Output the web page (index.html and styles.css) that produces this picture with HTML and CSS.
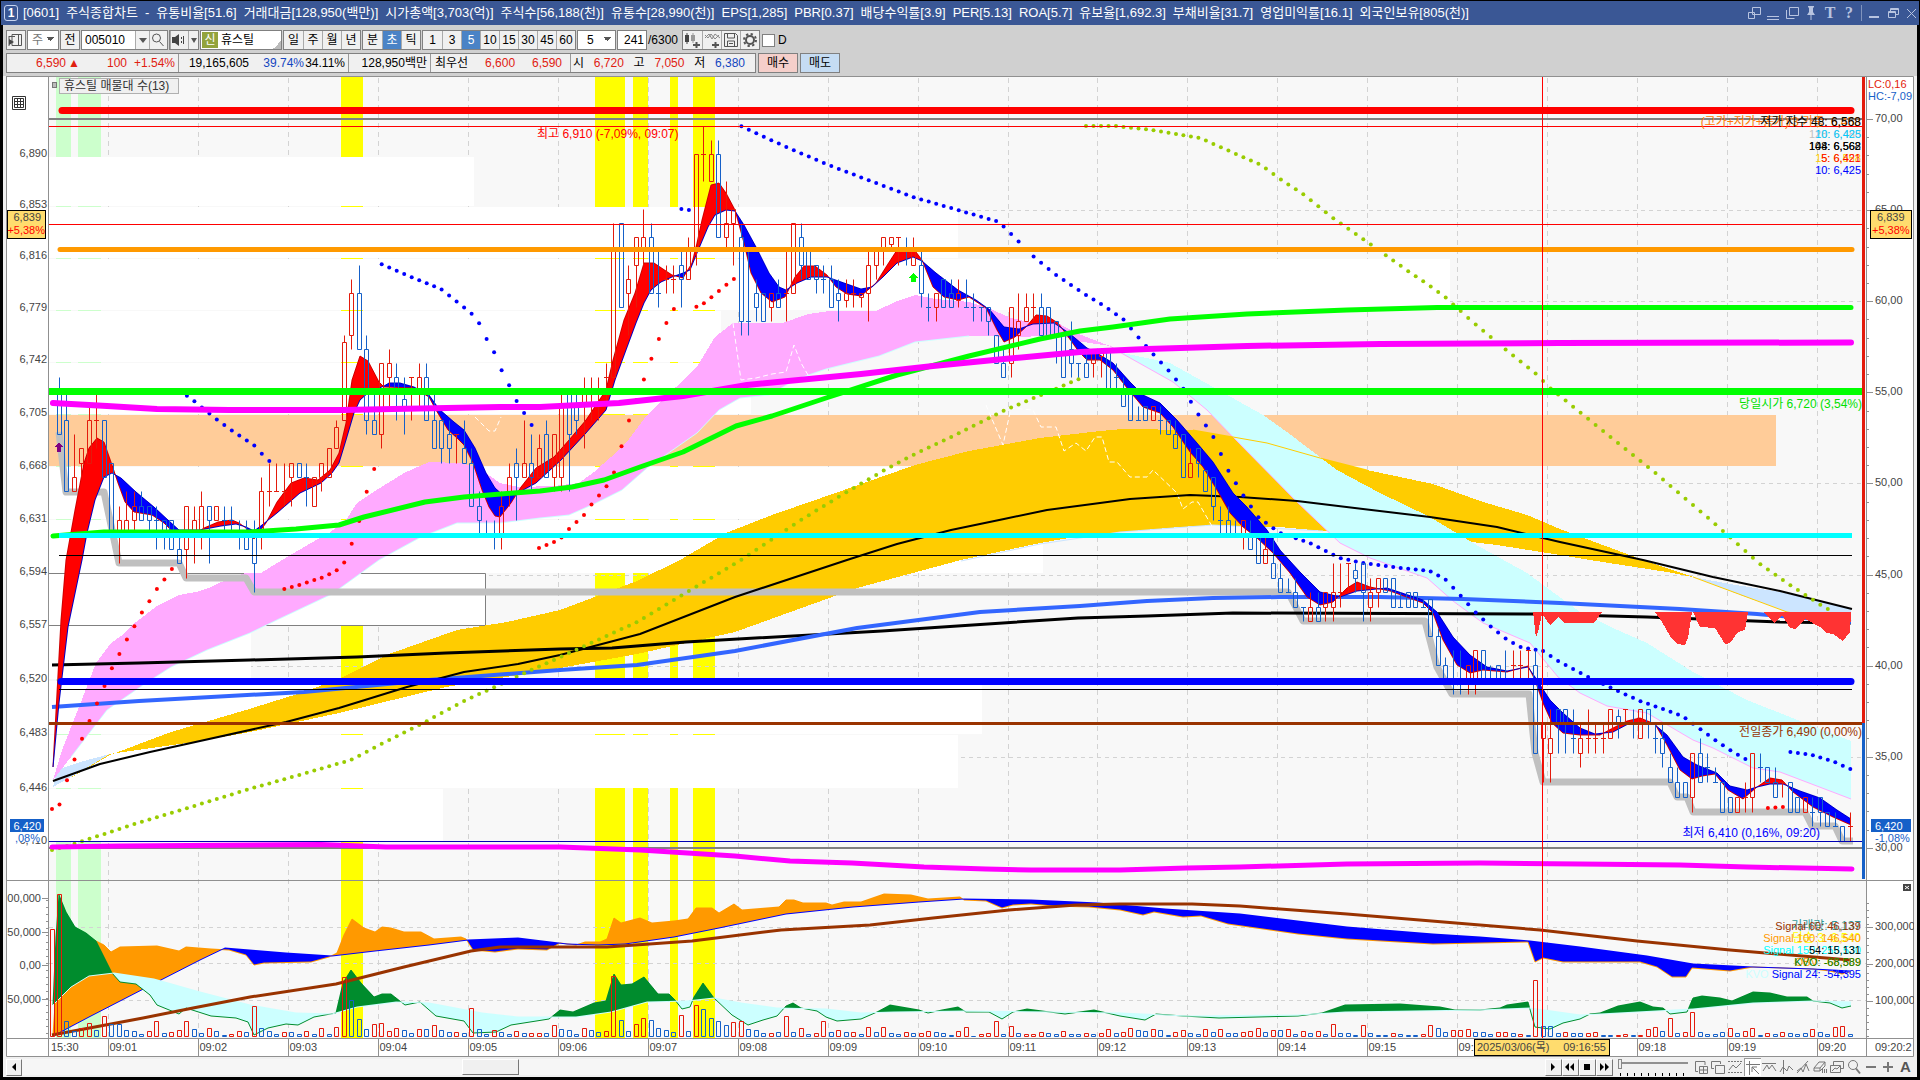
FILE: index.html
```html
<!DOCTYPE html>
<html lang="ko">

<head>
  <meta charset="utf-8">
  <title>[0601] 주식종합차트</title>
  <link rel="stylesheet" href="styles.css">
</head>

<body>
  <header class="titlebar">
    <span class="badge">1</span>
    <h1 class="title">
      <span>[0601]</span><span>주식종합차트</span><span>-</span><span>유통비율[51.6]</span><span>거래대금[128,950(백만)]</span><span>시가총액[3,703(억)]</span><span>주식수[56,188(천)]</span><span>유통수[28,990(천)]</span><span>EPS[1,285]</span><span>PBR[0.37]</span><span>배당수익률[3.9]</span><span>PER[5.13]</span><span>ROA[5.7]</span><span>유보율[1,692.3]</span><span>부채비율[31.7]</span><span>영업미익률[16.1]</span><span>외국인보유[805(천)]</span>
    </h1>
    <div class="winbtns">
      <button type="button" aria-label="분리"><svg width="14" height="14"><path d="M5.5 1.5h8v7h-8zM1.5 6.5h6v6h-6z" /></svg></button>
      <button type="button" aria-label="내리기"><svg width="14" height="14"><path d="M1 10.500h12M1 13.500h12" /></svg></button>
      <button type="button" aria-label="복사"><svg width="14" height="14"><path d="M4.500 1.500h9v8h-9zM1.500 4v8.500h8" /></svg></button>
      <button type="button" aria-label="고정"><svg width="14" height="14"><path class="solid" d="M4 0h6v1l-1 1v4l2 3H3l2-3V2L4 1zM6.500 9h1v5h-1z" /></svg></button>
      <button type="button" class="serif">T</button>
      <button type="button" class="serif">?</button>
      <i class="bar"></i>
      <button type="button" aria-label="최소화"><svg width="14" height="14"><path stroke-width="2" d="M2 11h10" /></svg></button>
      <button type="button" aria-label="이전 크기"><svg width="14" height="14"><path d="M4.500 5V2.500h8v6H10M2.500 5.500h7v6h-7zM2 6.500h8M4 3.500h9" /></svg></button>
      <button type="button" aria-label="닫기"><svg width="14" height="14"><path d="M2 3l9 9M11 3l-9 9" /></svg></button>
    </div>
  </header>

  <main class="window">
    <div class="toolbar">
      <button type="button" class="box" aria-label="목록"><svg width="18" height="18"><path d="M5 3.500h9.500v11H5zM11.500 4v10M2 5.500h6M2 5v10" /><path class="solid" d="M2 8l5 3-5 3z" /></svg></button>
      <select class="box sel w32" aria-label="종목구분"><option>주</option></select>
      <button type="button" class="box">전</button>
      <div class="box combo">
        <input type="text" value="005010" aria-label="종목코드">
        <button type="button" class="drop" aria-label="열기"></button>
        <button type="button" class="find" aria-label="검색"><svg width="16" height="18"><circle cx="6.500" cy="7" r="4" /><path d="M9.500 10.500l4 4.500" /></svg></button>
      </div>
      <div class="box combo">
        <button type="button" class="find" aria-label="소리"><svg width="16" height="18"><path class="solid" d="M1 6h3l4-3v12l-4-3H1zM10 6h1v2h-1zM10 10h1v2h-1zM12 5h1v8h-1z" /></svg></button>
        <button type="button" class="drop thin" aria-label="열기"></button>
      </div>
      <div class="box stock"><em>신</em><span>휴스틸</span></div>
      <div class="group"><button type="button">일</button><button type="button">주</button><button type="button">월</button><button type="button">년</button></div>
      <div class="group"><button type="button">분</button><button type="button" class="on">초</button><button type="button">틱</button></div>
      <div class="group"><button type="button">1</button><button type="button">3</button><button type="button" class="on">5</button><button type="button">10</button><button type="button">15</button><button type="button">30</button><button type="button">45</button><button type="button">60</button></div>
      <select class="box sel w38 pad" aria-label="주기"><option>5</option></select>
      <input type="text" class="box count" value="241" aria-label="개수"><span class="total">/6300</span>
      <div class="group icons">
        <button type="button" aria-label="차트종류"><svg width="18" height="18"><path class="solid" d="M2 4h4v7H2zM3.500 2h1v11h-1z" /><path class="solid lite" d="M8 4h4v6H8zM9.500 2h1v10h-1z" /><path stroke-width="2" d="M10 14h7M13.500 11v6" /></svg></button>
        <button type="button" aria-label="지표추가"><svg width="18" height="18"><path class="thinline" d="M2 7l4-4 3 5 3-5 5 4M2 4l3 3 3-4 4 5 4-4" /><path stroke-width="2" d="M9 14h7M12.500 11v6" /></svg></button>
        <button type="button" aria-label="저장"><svg width="18" height="18"><path d="M2.500 2.500h11l2 2v11h-13zM5.500 3v4h7V3M5.500 15v-5h7v5M7 12.500h4" /></svg></button>
        <button type="button" aria-label="설정"><svg width="18" height="18"><circle cx="9" cy="9" r="4" stroke-width="2" /><circle cx="9" cy="9" r="6" stroke-width="2" stroke-dasharray="2.300 2.400" /></svg></button>
      </div>
      <label class="check"><input type="checkbox">D</label>
    </div>

    <div class="quotes">
      <div class="quotebox">
        <div class="cell w172 up"><b class="c60">6,590</b><b class="tri">▲</b><b class="fill">100</b><b class="c48">+1.54%</b></div>
        <div class="cell w170"><b class="c70">19,165,605</b><b class="fill dn">39.74%</b><b class="c41">34.11%</b></div>
        <div class="cell w82"><b class="fill">128,950백만</b></div>
        <div class="cell w140"><b>최우선</b><b class="fill up">6,600</b><b class="fill up">6,590</b></div>
        <div class="cell last"><span>시</span><b class="up">6,720</b><span>고</span><b class="up">7,050</b><span>저</span><b class="dn">6,380</b></div>
      </div>
      <button type="button" class="buy">매수</button>
      <button type="button" class="sell">매도</button>
    </div>

    <svg id="chart" class="chart" viewBox="6 76 1908 981" preserveAspectRatio="none" role="img" aria-label="휴스틸 차트"></svg>

    <footer class="bottombar">
      <button type="button" class="arrow" aria-label="왼쪽"><svg width="14" height="14"><path class="solid" d="M9 3v8L5 7z" /></svg></button>
      <input type="range" class="scroll" min="0" max="100" value="30" aria-label="스크롤">
      <div class="player">
        <button type="button" aria-label="재생"><svg width="14" height="14"><path class="solid" d="M5 3v8l4-4z" /></svg></button>
        <button type="button" aria-label="뒤로"><svg width="14" height="14"><path class="solid" d="M6 3v8L2 7zM11 3v8L7 7z" /></svg></button>
        <button type="button" aria-label="정지"><svg width="14" height="14"><path class="solid" d="M4 4h6v6H4z" /></svg></button>
        <button type="button" aria-label="앞으로"><svg width="14" height="14"><path class="solid" d="M3 3v8l4-4zM8 3v8l4-4z" /></svg></button>
      </div>
      <input type="range" class="speed" min="0" max="10" value="0" aria-label="속도">
      <div class="tools">
        <button type="button" aria-label="창 추가"><svg width="16" height="16"><path d="M12 6V2.500H2.500v10H5M6.500 7.500h8v7h-8zM10.500 8v6M7 11h7" /></svg></button>
        <button type="button" aria-label="창 겹침"><svg width="16" height="16"><path d="M4 9.500H1.500v-7h9V5M5.500 6.500h9v8h-9z" /></svg></button>
        <button type="button" aria-label="영역"><svg width="16" height="16"><path stroke-dasharray="2 1" d="M1 2.500h14M1 13.500h14" /><path d="M2 11l4-5 3 3 5-5" /></svg></button>
        <button type="button" class="sel-tool" aria-label="십자선"><svg width="16" height="16"><path d="M1 4.500h14M4.500 1v14M7 7l7 7M7 7v5M7 7h5" /></svg></button>
        <button type="button" aria-label="수평선"><svg width="16" height="16"><path d="M1 4.500h14M2 12l4-6 2 4 3-4 4 6" /></svg></button>
        <button type="button" aria-label="수직선"><svg width="16" height="16"><path d="M5.500 1v14M2 13l3-5 4 4 2-5 4 4" /></svg></button>
        <button type="button" aria-label="추세선"><svg width="16" height="16"><path d="M2 14L13 2M2 12l4-3 2 4 3-8 3 7" /></svg></button>
        <button type="button" aria-label="지우기"><svg width="16" height="16"><path d="M2 9l5-6h6l-5 6zM2 9v3h6V9M8 12l5-5V3M10.500 10v4M12.500 10v4M14.500 10v4" /></svg></button>
        <button type="button" aria-label="복제"><svg width="16" height="16"><path d="M4.500 6V2.500h10v7H12M1.500 6.500h10v7h-10zM3 12l3-3 2 1 3-3" /></svg></button>
        <button type="button" aria-label="돋보기"><svg width="16" height="16"><circle cx="7" cy="6" r="4.500" /><path stroke-width="2" d="M10 9.500l4 5" /></svg></button>
        <button type="button" aria-label="축소"><svg width="16" height="16"><path stroke-width="2" d="M3 8h10" /></svg></button>
        <button type="button" aria-label="확대"><svg width="16" height="16"><path stroke-width="2" d="M3 8h10M8 3v10" /></svg></button>
        <button type="button" class="auto">A</button>
      </div>
    </footer>
  </main>

  <script src="chart.js"></script>
</body>

</html>
```
FILE: styles.css
```css
* {
  box-sizing: border-box;
}

body {
  margin: 0;
  height: 100vh;
  display: flex;
  flex-direction: column;
  padding: 1px 1px 3px;
  background: #000;
  font: 12px/18px "Liberation Sans", "Noto Sans CJK KR", sans-serif;
  color: #000;
  overflow: hidden;
}

button,
input,
select {
  font: inherit;
  color: inherit;
  margin: 0;
  padding: 0;
  border: 0;
  border-radius: 0;
  background: none;
  outline: 0;
}

svg {
  display: block;
  fill: none;
  stroke: #555;
}

svg .solid {
  fill: #444;
  stroke: none;
}

svg .lite {
  fill: #999;
}

svg .thinline {
  stroke: #888;
}

/* title bar */
.titlebar {
  flex: none;
  height: 24px;
  display: flex;
  align-items: center;
  padding-left: 3px;
  background: #3a5795;
  color: #fff;
}

.badge {
  width: 14px;
  height: 16px;
  border: 1px solid #c8d4f0;
  border-radius: 3px;
  font-weight: bold;
  line-height: 15px;
  text-align: center;
}

.title {
  flex: 1;
  display: flex;
  gap: 7px;
  margin: 0 0 0 5px;
  font: inherit;
  font-size: 13px;
  white-space: nowrap;
}

.winbtns {
  display: flex;
  align-items: center;
  gap: 5px;
}

.winbtns button {
  width: 14px;
  height: 16px;
  color: #b8c4e0;
}

.winbtns svg {
  stroke: #b8c4e0;
}

.winbtns .solid {
  fill: #b8c4e0;
}

.winbtns .serif {
  font: bold 16px/16px "Liberation Serif", serif;
}

.winbtns .bar {
  width: 1px;
  height: 16px;
  background: #8093bd;
}

/* toolbar */
.window {
  flex: 1;
  min-height: 0;
  display: flex;
  flex-direction: column;
  margin: 0 2px;
  background: #f0f0f0;
}

.toolbar {
  flex: none;
  display: flex;
  gap: 1px;
  padding: 5px 3px 0;
  background: #d0d0d0;
}

.box,
.group {
  flex: none;
  height: 20px;
  border: 1px solid #808080;
  background: #f0f0f0;
}

button.box {
  width: 20px;
}

.sel {
  appearance: none;
  padding-left: 4px;
  background: conic-gradient(from -45deg at 50% 100%, #555 90deg, transparent 0) right 4px top 6px / 8px 4px no-repeat #fff;
}

.w32 {
  width: 32px;
  color: #777;
}

.w38 {
  width: 39px;
}

.pad {
  padding-left: 9px;
}

.combo {
  display: flex;
}

.combo input {
  width: 53px;
  padding-left: 3px;
  background: #fff;
}

.drop {
  width: 14px;
  border-left: 1px solid #aaa;
}

.drop::after {
  content: "";
  display: block;
  margin: 0 auto;
  width: 0;
  border: 4px solid transparent;
  border-top: 5px solid #555;
  border-bottom: 0;
}

.drop.thin {
  width: 10px;
}

.thin::after {
  border-width: 5px 3px 0;
}

.find {
  width: 18px;
  border-left: 1px solid #aaa;
}

.stock {
  display: flex;
  width: 82px;
  background: linear-gradient(135deg, transparent 50%, #bbb 50%) right bottom / 8px 8px no-repeat #fff;
}

.stock em {
  width: 16px;
  margin: 1px;
  background: #93a33c;
  color: #fff;
  font-style: normal;
  line-height: 16px;
  text-align: center;
}

.stock span {
  padding-left: 2px;
}

.group {
  display: flex;
}

.group button {
  width: 19px;
  border-left: 1px solid #aaa;
}

.group button:first-child {
  border-left: 0;
}

.group .on {
  background: #4a83c6;
  color: #fff;
}

.count {
  width: 30px;
  padding-left: 6px;
  background: #fff;
}

.total {
  width: 33px;
  line-height: 20px;
}

.check {
  display: flex;
  align-items: center;
  gap: 3px;
}

.check input {
  appearance: none;
  width: 13px;
  height: 13px;
  margin-left: 1px;
  border: 1px solid #808080;
  background: #fff;
}

/* quote line */
.quotes {
  flex: none;
  display: flex;
  gap: 2px;
  padding: 3px;
  background: #d0d0d0;
}

.quotebox {
  display: flex;
  width: 750px;
  height: 20px;
  border: 1px solid #808080;
  background: #f0f0f0;
}

.cell {
  display: flex;
  justify-content: space-between;
  padding: 0 3px 0 4px;
  border-right: 1px solid #999;
}

.cell b {
  font-weight: normal;
  text-align: right;
}

.cell .fill {
  flex: 1;
}

.w172 {
  width: 172px;
}

.w170 {
  width: 170px;
}

.w82 {
  width: 82px;
}

.w140 {
  width: 140px;
  padding-right: 8px;
}

.last {
  flex: 1;
  padding: 0 10px 0 2px;
  border: 0;
}

.cell .c60 {
  width: 55px;
}

.c48 {
  width: 48px;
}

.c41 {
  width: 41px;
}

.c70 {
  width: 66px;
}

.tri {
  width: 14px;
}

.up {
  color: #e02010;
}

.dn {
  color: #1446c0;
}

.buy,
.sell {
  width: 40px;
  border: 1px solid #808080;
  background: #f5cfca;
}

.sell {
  background: #c5dcf3;
}

/* chart */
.chart {
  flex: 1;
  min-height: 0;
  width: auto;
  margin: 0 3px;
  background: #fff;
  stroke: none;
}

.chart text {
  font-size: 11px;
  fill: #444;
  dominant-baseline: central;
}

.chart .ko {
  font-size: 12px;
}

.chart .end {
  text-anchor: end;
}

/* bottom bar */
.bottombar {
  flex: none;
  height: 20px;
  display: flex;
  align-items: center;
  padding: 0 3px;
}

.arrow,
.player button {
  width: 16px;
  height: 17px;
  background: #f0f0f0;
  border: 1px solid;
  border-color: #fff #777 #777 #fff;
}

.arrow .solid,
.player .solid {
  fill: #000;
}

.scroll,
.speed {
  appearance: none;
}

.scroll {
  flex: 1;
  height: 16px;
  background: #f6f6f6;
}

.scroll::-webkit-slider-thumb {
  appearance: none;
  width: 57px;
  height: 16px;
  background: #f0f0f0;
  border: 1px solid;
  border-color: #fff #777 #777 #fff;
}

.player {
  display: flex;
}

.player button {
  width: 17px;
}

.speed {
  width: 70px;
  height: 18px;
  margin: 0 5px;
  background: linear-gradient(#909090, #909090) 0 4px / 100% 2px no-repeat,
    repeating-linear-gradient(90deg, #000 0 1px, transparent 1px 7px) 2px 100% / 68px 3px no-repeat;
}

.speed::-webkit-slider-thumb {
  appearance: none;
  width: 4px;
  height: 10px;
  margin-top: -6px;
  background: #eee;
  border: 1px solid #888;
}

.tools {
  display: flex;
}

.tools button {
  width: 17px;
  height: 18px;
}

.tools svg {
  stroke: #777;
}

.tools .sel-tool {
  background: #fff;
  border-left: 1px solid #999;
  border-top: 1px solid #999;
}

.tools .auto {
  font: bold 15px/16px "Liberation Sans", sans-serif;
  color: #555;
}
```
FILE: chart.js
```js
var NS = "http://www.w3.org/2000/svg";
var chart = document.getElementById("chart");
var BLUE = "#0000ff", RED = "#ff0000";
var UP = "#e31b0c", DOWN = "#1560c8";

function add(tag, attrs, text) {
  var el = document.createElementNS(NS, tag);
  for (var k in attrs) el.setAttribute(k, attrs[k]);
  if (text) el.textContent = text;
  chart.appendChild(el);
  return el;
}
function rect(x, y, w, h, fill) {
  add("rect", { x: x, y: y, width: w, height: h, fill: fill, "shape-rendering": "crispEdges" });
}
function line(d, color, width, extra) {
  var a = { d: d, stroke: color, "stroke-width": width || 1, fill: "none", "stroke-linejoin": "round" };
  for (var k in extra) a[k] = extra[k];
  add("path", a);
}
function poly(points, fill) {
  add("polygon", { points: points, fill: fill, "shape-rendering": "crispEdges" });
}
function curve(points, color, width, extra) {
  line("M" + points, color, width, extra);
}
// labels with Korean in them are set one size up
function text(x, y, s, color, end) {
  var cls = (end ? "end" : "") + (/^[가-힣(]/.test(s) ? " ko" : "");
  add("text", { x: x, y: y, "class": cls, style: "fill:" + (color || "#444") }, s);
}
function parse(s) {
  return s.trim().split(/\s+/).map(function(p) { return p.split(",").map(Number); });
}
// value of a broken line at x
function at(pts, x) {
  for (var i = 1; i < pts.length; i++) {
    if (x <= pts[i][0]) {
      var a = pts[i - 1], b = pts[i];
      return a[1] + (b[1] - a[1]) * (x - a[0]) / (b[0] - a[0]);
    }
  }
  return pts[pts.length - 1][1];
}
// area between a fast and a slow line, coloured by which one is on top
function ribbon(fastStr, slowStr, above, below, fastColor, slowColor) {
  var f = parse(fastStr), s = parse(slowStr), top = [], bottom = [], base = [];
  for (var x = f[0][0]; x <= 1851; x += 1) {
    var a = at(f, x), b = at(s, x);
    top.push(x + "," + Math.min(a, b).toFixed(1));
    bottom.push(x + "," + Math.max(a, b).toFixed(1));
    base.unshift(x + "," + b.toFixed(1));
  }
  poly(top.concat(base).join(" "), above);
  poly(bottom.concat(base).join(" "), below);
  curve(fastStr, fastColor, 1);
  curve(slowStr, slowColor, 1);
}
function barX(i) { return 52 + 7.493 * i; }
function priceY(p) { return 841.3 - 9523 * Math.log(p / 6410); }
function dots(str, color) {
  var p = parse(str), last = p[p.length - 1][0];
  for (var i = 0; i <= 240; i++) {
    var x = barX(i);
    if (x < p[0][0] - 2 || x > last + 2) continue;
    add("circle", { cx: x.toFixed(1), cy: at(p, Math.max(x, p[0][0])).toFixed(1), r: 2, fill: color });
  }
}

/* background */
rect(49, 77, 1817, 961, "#f8f8f8");
[[56, 15, "#ccffcc"], [78, 23, "#ccffcc"], [341, 22, "#ffff00"], [595, 30, "#ffff00"], [633, 15, "#ffff00"], [670, 8, "#ffff00"], [693, 22, "#ffff00"]].forEach(function(b) {
  rect(b[0], 77, b[1], 961, b[2]);
});
var i, x;
for (i = 0; i < 20; i++) line("M" + (Math.round(108 + 89.95 * i) + 0.5) + " 78V1038", "#d3d3d3", 1, { "stroke-dasharray": "5 4" });
for (i = 0; i < 9; i++) line("M49 " + Math.round(119 + 91.1 * i) + ".5H1862", "#d3d3d3", 1, { "stroke-dasharray": "4 4" });
[927, 963, 1000].forEach(function(y) { line("M49 " + y + ".5H1866", "#d3d3d3", 1, { "stroke-dasharray": "4 4" }); });

/* volume profile rows */
[[157, 206, 474], [207, 258, 958], [259, 310, 1450], [311, 362, 721], [363, 414, 751], [467, 519, 900], [520, 573, 1043], [574, 625, 486], [626, 679, 251], [681, 734, 982], [735, 788, 958], [789, 841, 443]].forEach(function(r) {
  rect(49, r[0], r[2] - 49, r[1] - r[0], "#fff");
});
rect(49, 415, 1727, 51, "#ffcc99");
line("M49 573.5H485.5V625.5H49", "#808080");

line("M49 119H1862M49 848H1862", "#808080", 2);

/* slow bands */
poly("53,787 57,770 80,762 110,754 85,769", "#cce5ff");
poly("1693,577 1730,584 1780,592 1851,609 1851,612 1787,612 1740,595", "#cce5ff");
poly("53,788 110,755 171,732 246,710 307,691 343,677 389,654 457,630 507,622 560,610 637,581 680,560 726,533 772,515 844,490 915,465 969,451 1040,438 1100,431 1123,429 1193,430 1233,437 1267,443 1320,458 1367,470 1433,484 1480,501 1527,515 1560,529 1643,560 1693,577 1667,572 1590,560 1560,555 1497,545 1447,539 1323,531 1280,527 1213,525 1180,527 1120,532 1069,538 1040,543 961,560 857,588 735,632 637,654 560,668 446,687 339,713 250,732 200,741 110,754", "#ffcc00");
curve("1693,577 1787,612 1851,622", "#ffcc00", 1);
curve("961,561 1040,544 1120,532 1213,525 1323,531", "#cce5ff", 1);
poly("53,780 62,750 79,707 96,663 111,643 121,636 136,622 157,606 179,595 196,592 211,587 232,577 246,573 261,573 282,560 311,543 329,533 346,520 357,503 375,491 404,473 429,462 461,463 479,468 500,483 518,487 554,486 579,483 594,472 611,457 629,439 647,415 676,387 697,367 715,337 733,323 783,323 808,314 829,311 876,311 897,301 915,295 936,299 969,302 986,307 1011,318 1029,322 1058,323 1076,333 1110,346 1090,343 1076,341 1058,335 1022,337 969,336 915,342 879,356 826,369 797,379 769,395 740,398 719,410 697,433 647,468 622,490 594,504 569,515 540,518 500,523 457,523 421,537 379,560 332,594 279,619 250,633 207,650 171,667 143,685 107,710 71,757", "#ffaaff");
curve("71,757 107,710 143,685 171,667 207,650 250,633 279,619 332,594 379,560 421,537 457,523 500,523 540,518 569,515 594,504 622,490 647,468 697,433 719,410 740,398 769,395 797,379 826,369 879,356 915,342 969,336", "#ccffff", 1);
poly("1110,346 1123,353 1170,363 1213,387 1263,415 1287,432 1337,470 1380,493 1430,517 1473,543 1527,573 1580,612 1613,628 1647,643 1693,672 1747,700 1800,721 1851,741 1851,799 1780,772 1753,768 1713,748 1693,740 1647,713 1607,706 1580,693 1558,677 1530,643 1483,623 1453,601 1427,578 1370,558 1340,543 1297,502 1233,437 1207,410 1173,382 1123,354", "#ccffff");
curve("1110,346 1123,354 1173,382 1207,410 1233,437 1297,502 1340,543 1370,558 1427,578 1453,601 1483,623 1530,643 1558,677 1580,693 1607,706 1647,713 1693,740 1713,748 1753,768 1780,772 1851,799", "#ffaaff", 1);
curve("1193,430 1233,437 1267,443 1320,458 1367,470", "#ffcc00", 1);

curve("59,432 66,492 104,492 119,563 179,563 186,578 246,578 254,592 1288,592 1303,621 1425,621 1437,667 1452,694 1529,694 1535,753 1543,782 1670,782 1677,797 1687,797 1693,812 1805,812 1812,826 1835,826 1842,841 1853,841", "#c0c0c0", 7);
["733,323 741,380 756,378 772,374 786,372 794,345 801,363 808,375", "986,405 1003,445 1011,408 1033,410 1041,427 1056,427 1064,451 1076,443 1086,451 1095,437 1102,437 1109,462 1117,462 1130,477 1147,477 1153,470 1177,493 1183,509 1192,502 1198,502 1213,528", "475,417 489,431 495,431 501,417"].forEach(function(p) {
  curve(p, "#fff", 1, { "stroke-dasharray": "5 3" });
});

/* moving averages */
curve("52,665 139,663 250,660 357,657 446,653 560,649 612,648 686,642 882,631 1078,618 1147,616 1233,613 1533,614 1647,617 1780,622 1851,623", "#000", 3);
curve("52,707 139,701 304,692 429,680 560,670 637,665 735,651 857,628 980,612 1080,606 1147,601 1213,598 1280,597 1380,597 1463,599 1560,603 1680,609 1757,614 1851,622", "#3366ff", 4);
curve("53,781 100,764 150,752 200,741 286,722 339,708 407,687 464,672 518,664 560,655 640,634 735,597 847,560 897,544 951,530 1004,519 1047,510 1100,503 1130,499 1190,495 1240,497 1297,501 1363,509 1430,517 1497,527 1560,542 1643,560 1713,577 1780,591 1852,609", "#000", 2);

dots("52,850 74,844 104,834 141,822 194,806 246,790 299,775 351,760 389,740 427,721 464,701 486,691 531,670 554,660 637,622 741,560 771,540 801,520 845,493 890,467 913,455 951,437 1003,411 1041,395 1079,379", "#99cc00");
dots("1086,126 1115,126 1152,130 1200,138 1261,165 1280,179 1303,194 1333,218 1363,239 1408,271 1423,281 1445,297 1475,324 1505,349 1535,373 1550,388 1592,422 1653,471 1714,523 1760,564 1790,585 1827,609", "#99cc00");
["186,395 194,401 216,419 231,430 246,440 254,445 261,453 269,461", "381,264 411,277 441,289 456,301 471,313 479,323 486,338 494,352 501,369 509,385 516,400 524,413 531,425", "681,209 688,210", "741,126 786,147 831,166 876,183 913,197 951,208 996,221 1003,226 1019,242 1033,256 1056,275 1086,295 1101,304 1123,319 1138,337 1153,354 1168,370 1183,388 1198,414 1213,436 1228,470 1243,495 1258,517 1280,533 1310,543 1340,558 1363,563 1400,568 1430,571 1445,579 1460,595 1475,612 1490,626 1505,638 1520,647 1543,651 1558,661 1588,677 1618,691 1640,701 1677,714 1685,718 1700,729 1715,740 1730,750 1745,759", "1790,752 1812,755 1835,762 1850,769"].forEach(function(p) { dots(p, BLUE); });
["52,809 59,806 66,783 74,761 81,741 89,722 104,687 111,670 119,655 126,641 134,627 141,614 149,602 156,590 164,580 171,569", "284,589 299,585 321,578 336,571 344,563 351,546 359,522 366,494 374,469", "539,548 554,542 561,538 569,529 584,515 591,505 606,487 613,476 621,448 628,423 643,382 651,360 658,341 666,324 673,309", "696,307 703,304 719,291 733,279", "1767,808 1782,807"].forEach(function(p) { dots(p, RED); });

ribbon("53,767 57,693 61,620 66,560 75,510 84,463 89,448 97,438 104,442 112,465 118,483 125,502 134,512 152,515 164,523 179,538 193,535 204,528 218,522 232,520 239,523 246,528 254,539 266,523 277,502 291,483 304,478 318,480 330,470 339,453 346,423 352,380 360,356 368,361 379,382 384,387 414,388 429,397 436,410 448,430 457,438 464,445 473,463 482,490 489,507 495,516 500,517 511,503 521,487 536,468 554,457 569,440 586,420 606,390 613,360 624,320 635,293 644,263 654,263 672,275 683,278 692,263 697,243 702,220 711,185 719,183 726,193 735,210 744,243 751,273 761,293 772,302 785,297 795,277 804,266 815,266 827,275 836,287 847,294 861,296 876,283 886,267 897,250 913,248 922,260 933,287 944,297 958,300 969,297 986,308 997,330 1004,342 1015,337 1026,327 1036,315 1047,316 1058,323 1069,338 1079,352 1087,360 1100,360 1113,370 1127,388 1143,407 1160,413 1173,427 1190,452 1203,467 1217,490 1230,513 1243,527 1257,538 1273,553 1290,573 1307,597 1320,605 1333,602 1347,588 1357,582 1370,587 1390,591 1423,603 1433,613 1443,640 1457,665 1470,673 1483,670 1507,672 1528,666 1535,680 1543,703 1552,723 1563,733 1580,735 1600,735 1613,728 1627,721 1640,718 1655,724 1667,745 1680,770 1692,779 1702,776 1715,774 1728,790 1743,799 1757,787 1770,778 1782,780 1793,792 1813,807 1833,817 1851,825",
  "53,767 59,703 68,627 82,560 87,533 95,500 104,477 112,473 121,478 136,492 154,507 168,520 179,530 200,530 221,526 236,524 246,527 254,531 262,525 277,513 300,493 321,483 332,473 339,463 346,440 354,413 360,400 368,393 384,386 389,383 400,383 414,387 429,395 439,409 454,422 464,430 475,448 486,473 495,488 504,496 514,495 536,483 561,460 586,433 606,410 615,380 626,350 636,323 644,303 651,290 661,282 672,277 683,273 690,270 697,253 708,227 715,215 726,210 735,211 744,225 756,247 769,273 779,287 786,290 797,283 811,277 827,277 844,283 861,289 872,287 883,277 897,263 913,257 922,261 936,273 958,290 976,300 990,310 1004,327 1019,329 1033,324 1054,323 1069,333 1087,348 1100,355 1113,363 1130,382 1143,395 1160,403 1177,420 1197,443 1213,462 1233,493 1247,507 1267,530 1280,550 1300,572 1320,592 1340,597 1357,591 1387,588 1423,600 1437,612 1453,637 1470,655 1487,667 1507,671 1528,667 1535,677 1550,700 1563,713 1580,728 1595,734 1613,732 1630,723 1653,723 1667,735 1683,757 1697,765 1717,773 1730,786 1747,790 1757,787 1770,784 1783,784 1800,791 1820,798 1837,810 1851,819",
  RED, BLUE, "#d00000", "#0000c8");

/* candles: colour, high, body top, body bottom, low in ticks of 10 over 6,400 */
var candles = "r,20,20,20,20 b,33,32,29,29 b,32,30,25,25 r,29,26,25,25 r,28,28,27,26 r,31,30,27,27 r,32,30,30,28 b,30,30,26,26 b,27,27,22,22 r,24,23,22,20 r,25,23,22,22 r,25,24,23,22 b,25,24,23,23 b,24,24,23,22 b,24,23,23,21 b,23,23,22,21 b,23,23,21,21 b,22,21,20,20 r,24,24,21,19 r,24,23,22,20 r,25,24,22,21 b,24,24,23,20 r,24,24,23,23 b,24,23,23,22 b,24,23,23,22 b,23,22,22,21 b,23,22,21,21 b,23,22,20,18 r,26,25,22,21 r,27,25,25,24 r,27,25,25,25 r,27,25,25,24 r,27,27,26,24 b,27,27,26,26 b,27,26,26,24 r,26,26,24,24 r,27,27,26,25 r,28,28,26,26 r,30,29.5,28,28 r,36,35.5,30,30 r,40,39,36,35 b,41,39,35,35 b,36,35,30,29 b,32,30,29,29 r,34,34,29,28 r,35,34,33,31 b,34,33,32,30 b,33,31.5,31,29 r,33,33,33,30 r,34,33,32,31 b,34,33,30,30 b,32,30,28,28 b,30,30,28,27 b,30,29,28,27 r,29,29,29,27 b,30,28,27,27 b,28,27,24,24 b,25,24,23,22 b,23,22,22,22 b,23,22,22,21 r,25,24,22,21 r,27,26,25,24 b,28,27,26,23 r,30,27,26,26 b,29,27,26,25 r,29,28,26,26 b,30,29,26,26 r,29,29,26,25 r,32,31,26,25 b,32,32,29,25 b,32,31,30,29 r,33,32,31,28 r,33,31,31,30 r,33,32,32,30 r,34,33,33,31 r,44,42,33,33 b,44,44,38,38 r,41,40,39,36 r,43,43,41,38 r,45,43,42,41 b,44,43,39,39 b,42,39,39,38 r,41,40,40,39 r,41,40,40,39 b,42,41,40,38 r,43,42,40,40 r,49,49,42,41 r,51,49,49,47 r,50,49,47,47 b,50,49,43,43 r,47,44,43,42 r,45,45,44,41 b,44,43,37,36 b,42,37,37,36 b,40,39,38,37 b,39,39,37,37 r,39,39,38,37 b,40,39,38,38 r,42,39,39,37 r,44,44,39,39 b,44,43,41,40 b,42,42,40,40 b,41,41,40,39 b,41,40,40,39 b,41,40,38,38 b,40,39,38.5,37 r,40,39,38.5,38 r,40,39,39,38 r,39,39,38.7,38 r,42,41,39,37 r,42,42,41,40 r,43,43,42,41 r,43,43,42.5,42 r,43,43,43,41 b,43,42,42,41 r,43,42,41,41 b,42,41,39,38 b,39,38,38,37 r,39,39,38,37 b,40,40,38,38 b,40,39,38,38 r,40,39,38.5,38 b,40,38,38,38 b,39,38,38,37 b,38,38,38,37 b,38,38,37,36 b,36,36,34,34 b,35,34,33,33 r,38,38,34,33 r,39,37,36,35 r,39,38,37,37 r,39,38,38,37 b,39,38,36,36 b,38,38,36,36 b,37,37,36,34 b,36,36,33,33 b,37,35,34,33 b,34,34,34,33 b,35,34,33,33 r,35,35,34,33 r,35,35,34.5,33 b,35,35,32,32 b,34,33,33,32 b,33,32,31,31 b,32,32,30,30 b,31,30,30,30 b,31,31,30,30 r,31,31,30,30 b,31,30,30,29 b,30,30,29,29 b,30,29,28,28 b,29,29,26,26 r,28,27,26,26 b,28,28,27,26 b,26.5,26.5,25,25 b,26,26,24,23 b,24,23,23,22 b,24,23,22,22 b,23,22,22,22 r,23,23,22,21 b,23,22,21,21 b,22,22,20,20 r,22,21,20,20 b,22,20,19,19 b,20,19,18,18 b,19,18,18,18 b,19,18,17,17 b,17,17,17,16 r,18,17,16,16 b,18,17,16,16 r,18,18,17,16 r,20,18,17,16 r,20,18,18,17 r,20,20,20,18 b,20,19.5,19,18 b,20,20,18,16 r,19,18,17,16 r,19,19,18,17 b,19,19,18,18 b,19,19,17,17 b,18,17,17,17 b,18,18,17,17 b,18,18,17,17 b,17.5,17,17,17 b,17.5,17.5,15,15 b,15.5,15,13,13 b,13.5,13,12,12 b,14,12,12,11 b,14,12,12,11 r,13,13,12,11 r,14,14,12,11 b,14,14,12,12 b,13,12,12,12 b,13,13,12,12 b,14,12,12,12 r,14,13,13,12 r,14,13,13,12 r,14,14,14,12 b,14,13,7,7 r,9,9,8,5 r,10,8,7,5 b,10,10,9,7 b,10,10,9,7 b,10,8,8,7 r,9,8,7,6 r,10,8,8,7 r,9,8,8,7 r,9,8,8,7 r,10,10,8,8 b,10,9.5,9,8 r,10,10,10,9 b,10,9,9,8 r,10,10,8,8 b,10,10,9,8 b,9,8,8,7 b,9,8,7,6 b,7,6,5,5 b,6,5,4,4 b,5,5,4,4 r,7,7,4,3 b,8,7,5,5 b,7,6,6,5 b,6,5,5,5 b,5,5,3,3 b,4,4,3,3 r,4,4,3,3 r,5,4,4,3 r,7,7,4,3 b,7,6,6,5 b,6,6,5,5 b,6,5,4,4 r,5,5,5,4 b,5,5,3,3 b,4,4,3,3 r,4,4,3,3 b,4,3,3,2 b,4,4,3,2 b,3,3,2,2 b,3,2,2,2 b,2,2,1,1 r,3,2,2,1".split(" ");
candles.forEach(function(c, n) {
  if (n == 0) return;
  var v = c.split(","), x = Math.floor(barX(n)) + 0.5;
  var y = v.slice(1).map(function(k) { return Math.round(priceY(6400 + 10 * k)) + 0.5; });
  var d = "M" + x + " " + y[0] + "V" + y[1] + "M" + x + " " + y[2] + "V" + y[3];
  if (y[1] == y[2]) d += "M" + (x - 2.5) + " " + y[1] + "h5";
  else d += "M" + (x - 2) + " " + y[1] + "h4V" + y[2] + "h-4z";
  line(d, v[0] == "r" ? UP : DOWN, 1);
});

/* oscillator hanging from its base line */
["1533,612 1536,638 1538,632 1542,614 1550,625 1558,617 1565,623 1594,623 1602,612", "1655,612 1662,622 1670,636 1677,644 1685,645 1688,638 1692,612", "1693,612 1700,627 1715,628 1725,644 1730,643 1738,632 1745,630 1748,612", "1763,612 1775,623 1782,615 1790,628 1795,629 1805,619 1820,627 1827,633 1833,634 1843,641 1850,632 1851,612"].forEach(function(p) { poly(p, "#ff3333"); });

/* thick curves and levels */
curve("53,536 104,532 150,532 250,532 296,529 339,525 364,517 425,502 464,497 514,493 540,491 572,487 604,480 640,467 683,452 736,426 772,416 826,398 897,375 969,356 1040,339 1080,331 1113,327 1170,319 1247,314 1347,310 1437,307.5 1851,307.5", "#00ff00", 5, { "stroke-linecap": "round" });
curve("53,403 107,406 157,409 229,410 343,410 393,409 500,407 540,407 619,403 683,396 747,385 861,374 933,366 1004,359 1080,352 1147,349 1247,346 1380,344 1560,343 1851,342.5", "#ff00ff", 6, { "stroke-linecap": "round" });
curve("52,847 121,846 321,844.500 386,847 560,847 640,850 735,856 790,861 852,863 924,867 986,869 1031,870 1120,870 1187,868 1240,867 1347,864 1480,863 1580,864 1680,865 1747,867 1852,869", "#ff00ff", 5, { "stroke-linecap": "round" });
var round = { "stroke-linecap": "round" };
line("M62 110.500H1851", RED, 7, round);
line("M49 126.500H1862", RED, 1);
line("M60 249.500H1852", "#ff9900", 5, round);
line("M49 391.500H1862", "#00ff00", 7);
line("M59 535.500H1852", "#00ffff", 5);
line("M59 555.500H1852M59 689.500H1852", "#000", 1);
line("M61 681.500H1851", BLUE, 7, round);
line("M49 723.500H1862", "#993300", 3);
line("M49 841.500H1862", "#0000b4", 1);
poly("59,442 55,447 57,447 57,452 61,452 61,447 63,447", "#800080");
poly("913,273 909,278 911,278 911,282 916,282 916,278 918,278", "#00ff00");

/* lower pane */
ribbon("53,1035 59,945 66,949 82,946 94,940 104,945 111,952 120,947 157,946 179,951 186,947 211,949 229,950 246,955 254,965 264,963 311,962 329,957 337,953 344,935 352,919 364,928 375,932 382,927 391,928 404,932 421,932 434,939 461,937 466,939 473,950 495,952 518,949 547,950 560,943 576,945 585,942 600,942 607,939 614,918 621,923 640,918 652,923 674,921 688,919 696,908 712,908 719,913 734,904 742,910 779,907 786,900 794,900 803,903 826,903 832,905 844,902 861,902 884,894 911,895 928,899 960,897 964,900 986,901 1002,908 1013,905 1031,904 1053,906 1089,907 1120,910 1143,915 1154,912 1183,917 1201,916 1228,924 1298,934 1347,939 1433,944 1528,942 1535,962 1543,958 1563,962 1640,962 1657,967 1672,977 1686,977 1692,968 1730,971 1753,967 1813,969 1830,971 1842,974 1851,972",
  "53,1036 89,1017 157,982 200,960 225,948 286,953 332,956 375,951 429,945 468,940 518,938 567,944 598,945 625,944 674,937 719,928 786,914 853,907 919,902 964,899 1031,900 1098,903 1165,909 1240,914 1347,927 1433,934 1480,937 1530,941 1580,947 1647,956 1693,964 1753,967 1813,969 1851,971",
  "#ff9900", BLUE, "#ff9900", BLUE);
ribbon("53,1005 56,937 59,895 66,912 75,927 86,933 96,941 104,957 112,973 120,982 136,984 150,995 157,1005 179,1014 186,1008 211,1016 236,1018 248,1022 254,1035 268,1028 286,1024 298,1025 314,1017 336,1013 343,983 351,970 361,983 374,997 382,994 391,994 405,1005 420,1002 436,1016 464,1021 473,1033 496,1032 511,1025 549,1019 560,1010 573,1012 594,1003 606,1001 614,974 621,985 632,984 644,977 658,994 669,994 675,1000 682,1009 690,1007 694,997 703,983 714,998 732,1015 748,1025 763,1020 777,1016 786,1006 793,1003 801,1008 817,1011 826,1017 837,1021 861,1019 877,1012 890,1005 919,1010 928,1013 942,1010 958,1007 966,1012 989,1012 1002,1019 1013,1012 1027,1009 1065,1014 1094,1010 1120,1016 1145,1020 1156,1014 1183,1016 1219,1018 1298,1016 1322,1013 1345,1005 1400,1004 1440,1007 1455,1010 1480,1010 1500,1008 1507,1005 1528,1002 1531,1013 1535,1027 1550,1029 1563,1023 1580,1019 1590,1014 1600,1013 1618,1006 1640,1002 1653,1007 1663,1008 1670,1014 1687,1012 1693,998 1702,996 1720,998 1732,1001 1753,992 1770,993 1787,997 1807,997 1813,1001 1830,1003 1842,1008 1851,1006",
  "53,1005 71,987 89,976 114,973 154,979 200,992 250,1005 296,1013 332,1014 357,1007 396,1002 429,1003 482,1013 518,1017 576,1017 611,1012 647,1002 687,1001 714,998 741,1003 777,1008 826,1009 861,1013 893,1012 964,1011 1053,1012 1120,1013 1187,1016 1298,1015 1345,1012 1480,1010 1530,1008 1580,1015 1600,1014 1693,1009 1753,1003 1813,1001 1851,1002",
  "#008c2d", "#ccffff", "#008c2d", "#ccffff");
curve("52,1035 143,1018 193,1008 250,997 336,984 404,967 471,951 500,947 560,947 607,947 692,941 781,930 870,925 933,918 1009,910 1076,905 1120,904 1192,904 1240,906 1347,914 1480,925 1540,930 1637,941 1730,950 1850,960", "#993300", 3);

var volumes = "r107 r142 b15 b5 r8 r13 b6 r20 b12 b12 b6 b5 b2 r5 r15 b3 r4 r6 r15 b7 b3 r8 b5 b1 r2 r5 b4 r30 b8 b5 b2 r4 b4 b2 r5 b2 r8 b2 r9 r59 b36 b17 b7 r12 r13 r5 r8 b6 b3 r7 b7 r11 b6 b4 r4 b3 r28 b7 b2 r6 b4 b2 r5 b3 r3 r3 b3 r11 b7 b6 b2 r8 b6 b4 r5 r60 b16 b5 r12 r18 b16 b8 b6 b4 r21 b5 r31 b27 b18 b15 b11 r14 r15 b7 b6 b3 r3 b4 r20 b4 r8 b2 r3 r15 b4 r6 b4 r4 b2 r9 b4 r9 b3 b2 r4 b3 r3 r5 b4 b3 b1 r5 r9 b0 r2 r3 r15 b2 r10 b3 r2 r2 r4 b3 b2 r5 b2 b2 r3 b2 r3 r7 b3 r4 r8 b6 b5 r7 b6 b1 r4 r6 b3 b2 r7 b4 r7 b3 b3 r4 r5 r8 b4 r6 b6 r7 b2 r5 b3 r5 b2 r12 b3 b3 b1 r11 b3 b1 b1 r3 b2 b1 b1 r2 r11 b8 b4 r6 r6 r7 b4 b4 b2 r4 r4 b3 r2 b1 r56 b10 b10 b3 r4 b3 b3 r3 r4 b1 b1 r1 r2 b1 r1 r7 r9 b5 r18 b3 r4 r24 b4 b2 b2 b4 r8 b3 r5 r8 b1 r3 b2 r4 b3 b2 b3 r7 b4 b2 r9 r10 b2".split(" ");
volumes.forEach(function(v, n) {
  var h = +v.slice(1), x = Math.floor(barX(n)) - 1.5;
  line("M" + x + " 1036.500h4v-" + h + "h-4z", v[0] == "r" ? UP : DOWN, 1);
});

/* frame, axes */
line("M6 76.500H1913.500V1056.500H6.500V76M6 880.500H1913M6 1038.500H1913M48.500 77V1056M1866.500 77V1056", "#909090", 1);
rect(1862, 77, 3, 646, UP);
rect(1862, 723, 3, 156, DOWN);
for (i = 0; i < 20; i++) {
  x = Math.round(108 + 89.95 * i) + 0.5;
  line("M" + x + " 1038V1056", "#909090");
  if (i != 16) text(x + 1, 1047, "09:" + (i < 9 ? "0" : "") + (i + 1));
}
text(51, 1047, "15:30");
text(1875, 1047, "09:20:2");
[6890, 6853, 6816, 6779, 6742, 6705, 6668, 6631, 6594, 6557, 6520, 6483, 6446, 6410].forEach(function(p) {
  text(47, priceY(p) - 1, p.toLocaleString("en-US"), "", true);
});
for (i = 0; i < 9; i++) {
  text(1875, 118 + 91.1 * i, (70 - 5 * i) + ",00");
  line("M1867 " + Math.round(119 + 91.1 * i) + ".500h6", "#909090");
}
for (i = 1; i < 40; i++) line("M1867 " + Math.round(119 + 18.22 * i) + ".500h2", "#909090");
for (i = 0; i < 20; i++) {
  line("M1867 " + (1036 - 7 * i) + ".500h2M48 " + (1033 - 7 * i) + ".500h-2", "#909090");
}
["300,000", "200,000", "100,000"].forEach(function(s, n) {
  text(1875, 926 + 37 * n, s);
  line("M1867 " + (927 + 37 * n) + ".500h6", "#909090");
});
["00,000", "50,000", "0,00", "50,000"].forEach(function(s, n) {
  text(41, 898 + 33.5 * n, s, "", true);
  line("M48 " + Math.round(898 + 33.7 * n) + ".500h-6", "#909090");
});
text(1868, 84, "LC:0,16", UP);
text(1868, 96, "HC:-7,09", DOWN);

/* crosshair */
line("M49 224.500H1862M1542.500 77V1038", RED, 1);

/* price tags */
function tag(x, w) {
  add("rect", { x: x + 0.5, y: 210.5, width: w, height: 28, fill: "#ffdc6e", stroke: "#000" });
}
tag(7, 38);
text(41, 217, "6,839", "", true);
text(45, 230, "+5,38%", RED, true);
tag(1870, 41);
text(1877, 217, "6,839");
text(1872, 230, "+5,38%", RED);
rect(10, 819, 34, 13, DOWN);
rect(15, 832, 25, 10, "#fff");
text(41, 826, "6,420", "#fff", true);
text(40, 838, ",08%", DOWN, true);
rect(1871, 819, 40, 13, DOWN);
rect(1873, 832, 38, 10, "#fff");
text(1875, 826, "6,420", "#fff");
text(1875, 838, "-1,08%", DOWN);
add("rect", { x: 1474.5, y: 1039.5, width: 135, height: 16, fill: "#ffdc6e", stroke: "#000" });
text(1477, 1047, "2025/03/06(목)");
text(1606, 1047, "09:16:55", "", true);

/* labels on the plot */
add("rect", { x: 59.5, y: 78.5, width: 119, height: 15, fill: "#f0f0f0", stroke: "#b0b0b0" });
add("rect", { x: 52.5, y: 82.5, width: 4, height: 5, fill: "#bbb", stroke: "#777" });
text(64, 86, "휴스틸 매물대 수(13)", "#333");
add("path", { d: "M12.500 96.500h13v13h-13zM14.500 98.500h9v9h-9zM14 101.500h10M14 104.500h10M17.500 98v10M20.500 98v10", fill: "none", stroke: "#333" });
text(537, 134, "최고 6,910 (-7,09%, 09:07)", RED);
text(1862, 404, "당일시가 6,720 (3,54%)", "#00e000", true);
text(1862, 732, "전일종가 6,490 (0,00%)", "#993300", true);
text(1820, 833, "최저 6,410 (0,16%, 09:20)", BLUE, true);
[[122, "(고가+저가+종가)/3 가중: 6,458", "#ff7700"], [122, "저가 지수 48: 6,568", "#000"], [134, "128: 6,488", "#c0c0c0"], [134, "10: 6,425", "#00ccff"], [146, "108: 6,562", "#000"], [146, "144: 6,568", "#000"], [158, "15: 6,558", "#ffcc00"], [158, "5: 6,421", RED], [170, "30: 6,485", "#cce5ff"], [170, "10: 6,425", BLUE],
  [926, "거래량: 5,137", "#339999"], [926, "Signal 60: 46,139", "#993300"], [938, "단순 3: 6,540", "#ffff00"], [938, "Signal 100: 146,540", "#ff9900"], [950, "Signal 150: 258,530", "#00ffff"], [950, "54: 15,131", "#000"], [962, "OBV: -66,589", "#ff9900"], [962, "KVO: -68,589", "#008000"], [974, "KVO Signal 27: -54,395", "#ccffff"], [974, "Signal 24: -54,395", BLUE]].forEach(function(l) {
  text(1861, l[0], l[1], l[2], true);
});
rect(1903, 884, 8, 7, "#444");
line("M1905 886l4 3M1909 886l-4 3", "#fff");
```
